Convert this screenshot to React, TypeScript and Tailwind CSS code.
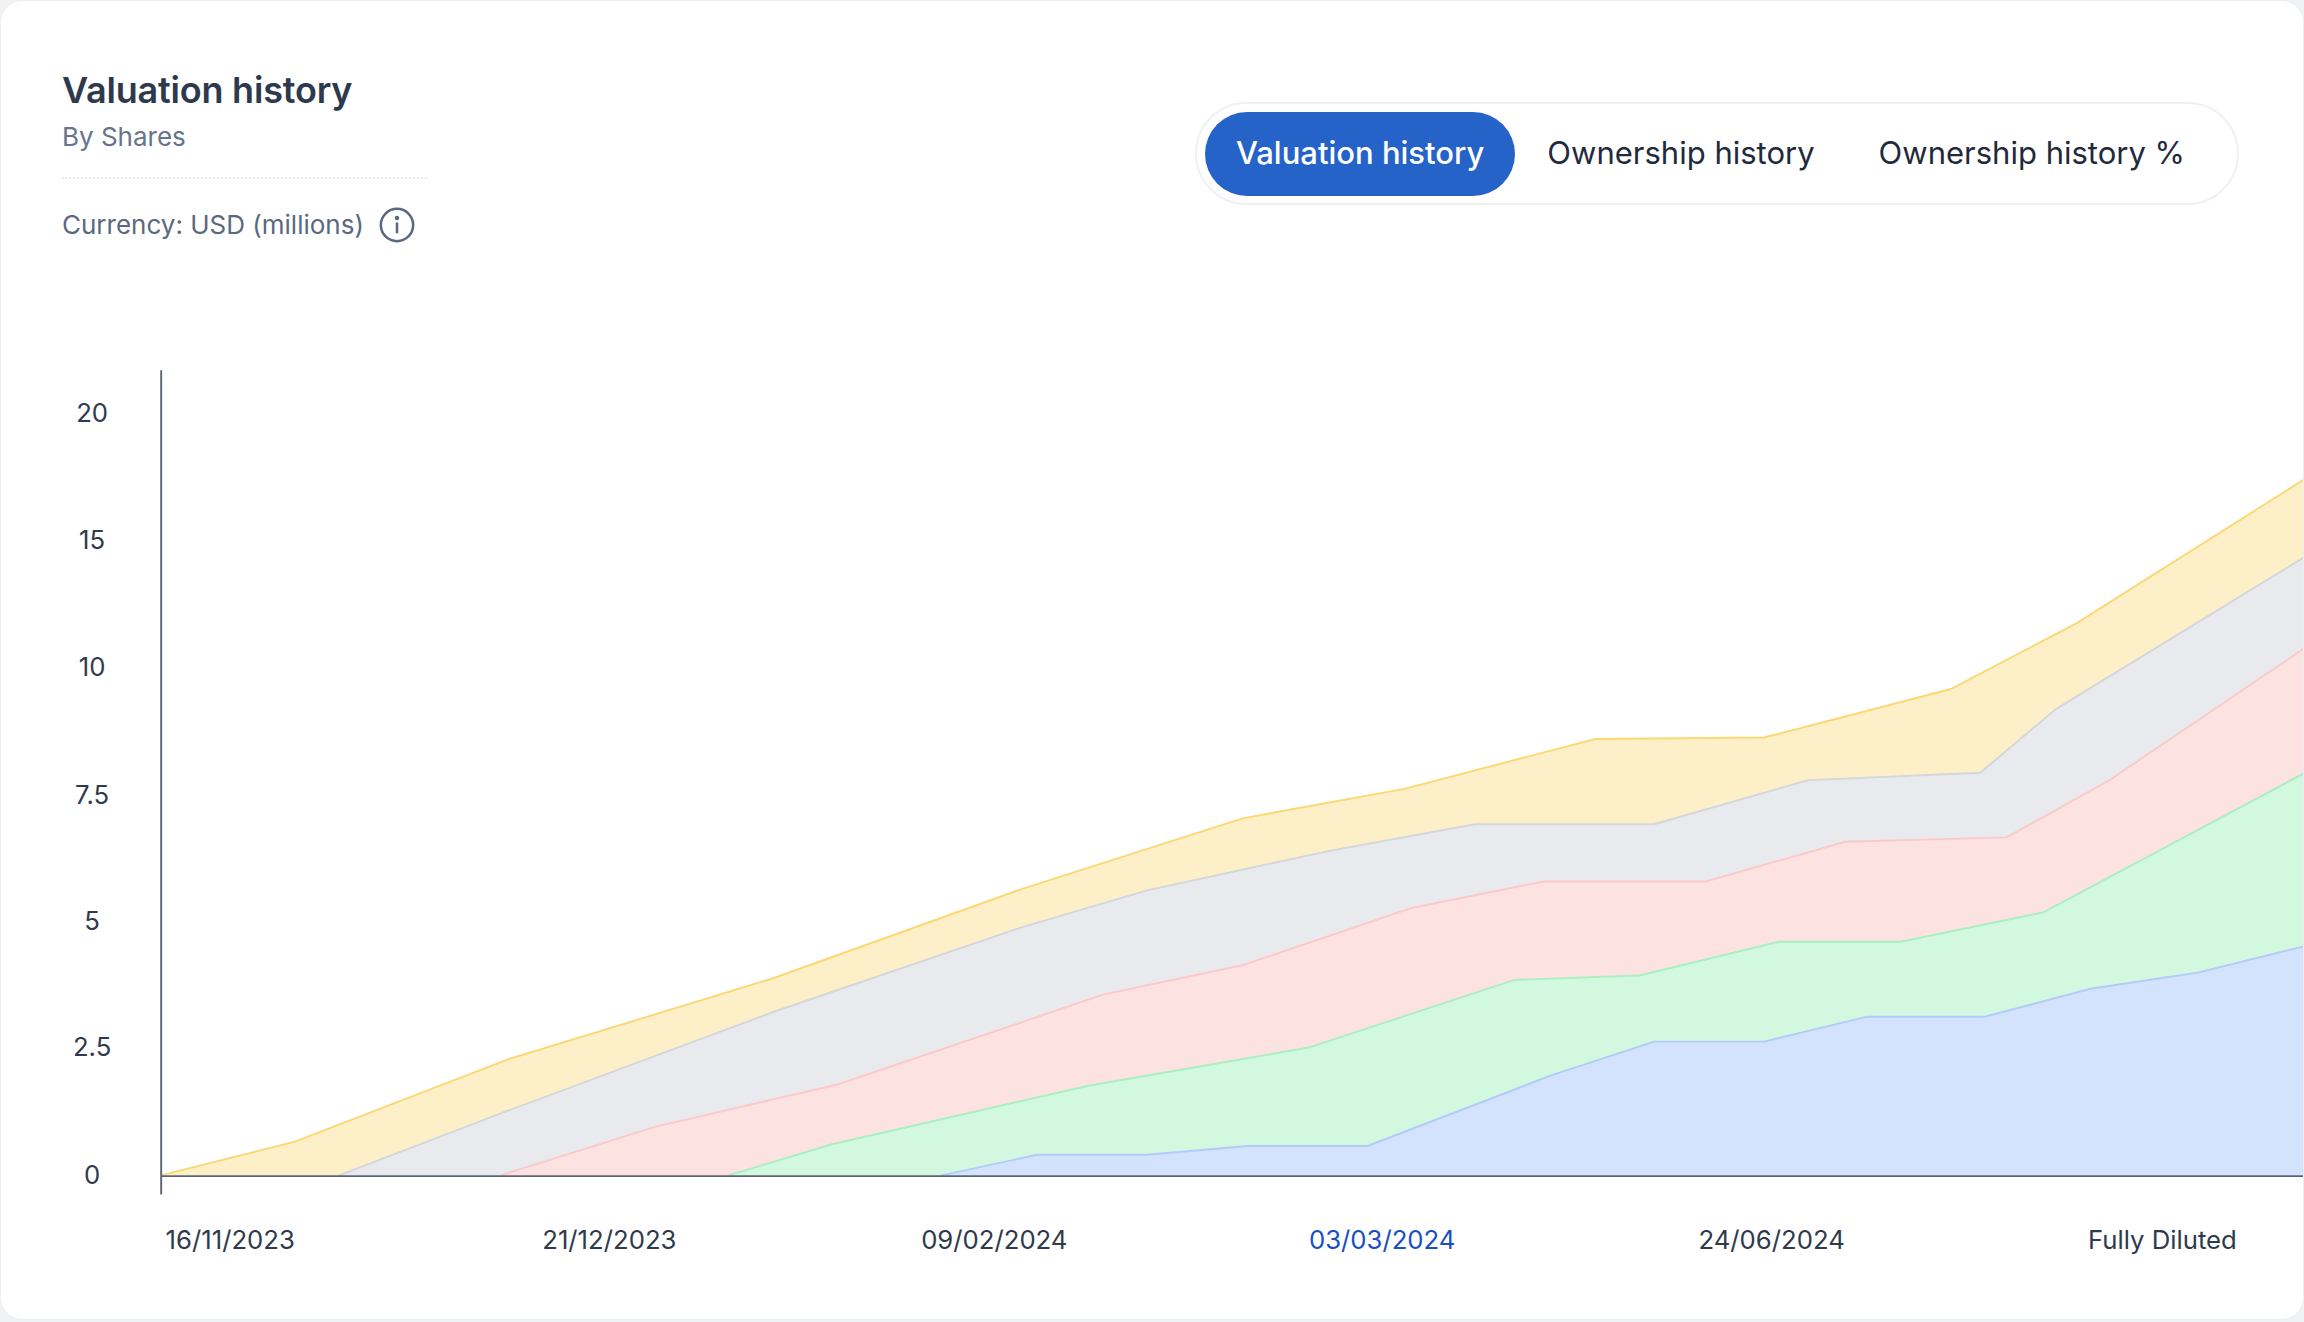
import React from "react";

type P = [number, number][];
const base = 799;
const layers: { pts: P; fill: string; stroke: string }[] = [
  { pts: [[109,799],[200,776],[345,720],[525,665],[695,604],[845,556],[955,536],[1085,502],[1200,501],[1327,468],[1413,423],[1568,325]], fill: "#fdf0c9", stroke: "#fbd872" },
  { pts: [[230,799],[345,755],[525,688],[695,630],[780,605],[905,578],[1003,560],[1125,560],[1230,530],[1347,525],[1398,482],[1568,378]], fill: "#e8eaee", stroke: "#d3d6dc" },
  { pts: [[340,799],[445,766],[570,737],[750,676],[845,656],[960,617],[1050,599],[1160,599],[1255,572],[1365,569],[1435,530],[1568,440]], fill: "#fde2e2", stroke: "#fcc9c9" },
  { pts: [[495,799],[565,778],[740,738],[890,712],[1030,666],[1115,663],[1210,640],[1293,640],[1390,620],[1568,525]], fill: "#d2f9df", stroke: "#a9efc1" },
  { pts: [[640,799],[705,785],[780,785],[848,779],[930,779],[1055,731],[1125,708],[1200,708],[1270,691],[1350,691],[1422,672],[1495,661],[1568,643]], fill: "#d3e2fd", stroke: "#b3cbf9" },
];

const yTicks: [string, number][] = [["20",280],["15",367],["10",453],["7.5",540],["5",626],["2.5",712],["0",799]];
const xTicks: [string, number, string?][] = [["16/11/2023",156],["21/12/2023",414],["09/02/2024",676],["03/03/2024",940,"#1a4fc2"],["24/06/2024",1205],["Fully Diluted",1471]];

function Chart() {
  return (
    <svg viewBox="0 240 1568 620" width={2304} height={911} style={{ display: "block" }}>
      {layers.map((l, i) => {
        const top = l.pts.map(p => p.join(",")).join(" ");
        const poly = `${top} 1568,${base} ${l.pts[0][0]},${base}`;
        return (
          <g key={i}>
            <polygon points={poly} fill={l.fill} />
            <polyline points={top} fill="none" stroke={l.stroke} strokeWidth={1.3} />
          </g>
        );
      })}
      <line x1={109} y1={251} x2={109} y2={812} stroke="#5b6474" strokeWidth={1.3} />
      <line x1={109} y1={799.5} x2={1568} y2={799.5} stroke="#5b6474" strokeWidth={1.3} />
      {yTicks.map(([t, y]) => (
        <text key={t} x={62} y={y + 6} textAnchor="middle" fontSize={17.5} fill="#2f3a4c" fontFamily="Inter, sans-serif">{t}</text>
      ))}
      {xTicks.map(([t, x, c]) => (
        <text key={t} x={x} y={849} textAnchor="middle" fontSize={17.5} fill={c || "#2f3a4c"} fontFamily="Inter, sans-serif">{t}</text>
      ))}
    </svg>
  );
}

export default function App() {
  return (
    <div className="w-[2304px] h-[1322px] bg-[#f1f2f4] overflow-hidden" style={{ fontFamily: "Inter, 'Noto Sans', sans-serif" }}>
      <div className="w-full h-[1320px] bg-white rounded-[22px] border border-[#eceef1] overflow-hidden">
        <div className="flex justify-between items-start pl-[61px] pr-[64px] pt-[66px] h-[353px]">
          <div className="flex flex-col">
            <div className="text-[36px] leading-[46px] font-semibold text-[#2d3a4e] tracking-[-0.2px]">Valuation history</div>
            <div className="text-[26px] leading-[36px] text-[#66758c] mt-[6px]">By Shares</div>
            <div className="w-[365px] border-t-2 border-dotted border-[#e8eaee] mt-[22px]" />
            <div className="flex items-center gap-[14px] mt-[26px]">
              <span className="text-[26px] text-[#5a6880]">Currency: USD (millions)</span>
              <svg width="38" height="38" viewBox="0 0 24 24" fill="none" stroke="#5a6880" strokeWidth="1.6" strokeLinecap="round">
                <circle cx="12" cy="12" r="10.2" />
                <line x1="12" y1="11" x2="12" y2="16.5" />
                <circle cx="12" cy="7.6" r="0.6" fill="#5a6880" />
              </svg>
            </div>
          </div>
          <div className="mt-[35px] flex items-center h-[103px] px-[8px] rounded-full border-2 border-[#eef0f2] bg-white">
            <div className="h-[84px] px-[31px] flex items-center rounded-full bg-[#2563c9] text-white text-[31px] font-medium">Valuation history</div>
            <div className="px-[32px] text-[31px] text-[#1f2a3c]">Ownership history</div>
            <div className="pl-[32px] pr-[44px] text-[31px] text-[#1f2a3c]">Ownership history %</div>
          </div>
        </div>
        <Chart />
      </div>
    </div>
  );
}
